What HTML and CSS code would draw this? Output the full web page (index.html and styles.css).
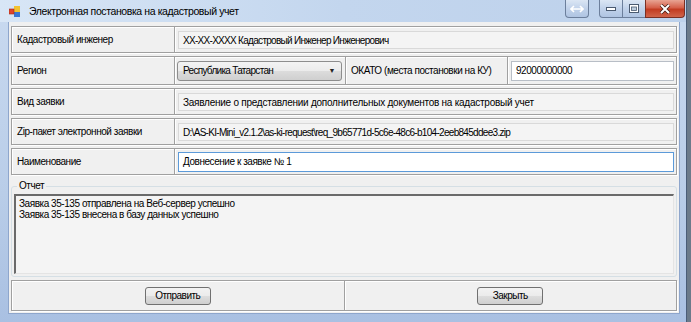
FILE: index.html
```html
<!DOCTYPE html>
<html lang="ru">
<head>
    <meta charset="UTF-8">
    <title>Электронная постановка на кадастровый учет</title>
    <link rel="stylesheet" href="styles.css">
</head>
<body>
    <div class="window">
        <!-- Title bar -->
        <div class="titlebar">
            <svg class="app-icon" width="12" height="11" viewBox="0 0 12 11">
                <rect x="0" y="3" width="5" height="5" fill="#e0452c"/>
                <rect x="5" y="0" width="6" height="6" fill="#f2c230"/>
                <rect x="5" y="6" width="6" height="5" fill="#3a78d4"/>
                <rect x="0" y="3" width="5" height="5" fill="none" stroke="#a02a18" stroke-width="0.6"/>
            </svg>
            <span class="title">Электронная постановка на кадастровый учет</span>
            <div class="caption-buttons">
                <div class="cap-btn help">
                    <svg width="14" height="8" viewBox="0 0 14 8"><path d="M1 4h12M4 1L1 4l3 3M10 1l3 3-3 3" stroke="#fff" stroke-width="1.6" fill="none"/></svg>
                </div>
                <div class="cap-group">
                    <div class="cap-btn min">
                        <svg width="10" height="4" viewBox="0 0 10 4"><rect x="0.5" y="0.5" width="9" height="3" fill="#fff" stroke="#4a5a70"/></svg>
                    </div>
                    <div class="cap-btn max">
                        <svg width="10" height="9" viewBox="0 0 10 9"><rect x="0.5" y="0.5" width="9" height="8" fill="#fff" stroke="#4a5a70"/><rect x="2.5" y="3" width="5" height="3.5" fill="#bcd" stroke="#4a5a70" stroke-width="0.8"/></svg>
                    </div>
                    <div class="cap-btn close">
                        <svg width="12" height="10" viewBox="0 0 12 10"><path d="M2 1l8 8M10 1L2 9" stroke="#3a1a14" stroke-width="3.4"/><path d="M2 1l8 8M10 1L2 9" stroke="#fff" stroke-width="2"/></svg>
                    </div>
                </div>
            </div>
        </div>

        <!-- Client area -->
        <div class="client">
            <div class="row">
                <div class="cell label-cell">Кадастровый инженер</div>
                <div class="cell value-cell">
                    <div class="readonly tight">XX-XX-XXXX Кадастровый Инженер Инженерович</div>
                </div>
            </div>

            <div class="row row-tall">
                <div class="cell label-cell">Регион</div>
                <div class="cell combo-cell">
                    <div class="combo">
                        <span class="tight">Республика Татарстан</span>
                        <span class="arrow">&#9660;</span>
                    </div>
                </div>
                <div class="cell okato-label">ОКАТО (места постановки на КУ)</div>
                <div class="cell okato-cell">
                    <div class="textbox">92000000000</div>
                </div>
            </div>

            <div class="row">
                <div class="cell label-cell">Вид заявки</div>
                <div class="cell value-cell">
                    <div class="readonly loose">Заявление о представлении дополнительных документов на кадастровый учет</div>
                </div>
            </div>

            <div class="row">
                <div class="cell label-cell">Zip-пакет электронной заявки</div>
                <div class="cell value-cell">
                    <div class="readonly tight">D:\AS-KI-Mini_v2.1.2\as-ki-request\req_9b65771d-5c6e-48c6-b104-2eeb845ddee3.zip</div>
                </div>
            </div>

            <div class="row">
                <div class="cell label-cell">Наименование</div>
                <div class="cell value-cell">
                    <div class="textbox focused">Довнесение к заявке № 1</div>
                </div>
            </div>

            <!-- Report group -->
            <div class="groupbox">
                <span class="group-title">Отчет</span>
                <div class="report">
                    <div>Заявка 35-135 отправлена на Веб-сервер успешно</div>
                    <div>Заявка 35-135 внесена в базу данных успешно</div>
                </div>
            </div>

            <!-- Buttons -->
            <div class="row button-row">
                <div class="cell btn-cell"><button class="btn">Отправить</button></div>
                <div class="cell btn-cell"><button class="btn">Закрыть</button></div>
            </div>
        </div>
    </div>
</body>
</html>
```

FILE: styles.css
```css
body {
    margin: 0;
    background: #6b7a8a;
    font-family: "Liberation Sans", Arial, sans-serif;
    font-size: 10px;
    letter-spacing: -0.45px;
    color: #000;
}

.window {
    width: 687px;
    height: 322px;
    background: linear-gradient(to bottom, #c9daf0 0%, #b9cde8 60%, #a9c0e2 100%);
    border-right: 1px solid #4a5d78;
    box-sizing: border-box;
    display: flex;
    flex-direction: column;
}

/* Title bar */
.titlebar {
    height: 22px;
    flex: none;
    display: flex;
    align-items: center;
    padding-left: 9px;
    background: linear-gradient(to right, #d8e6f6 0%, #c3d6ee 50%, #bdd1eb 100%);
}

.app-icon {
    margin-right: 8px;
}

.title {
    font-size: 10.5px;
    letter-spacing: -0.4px;
    color: #000;
}

.caption-buttons {
    margin-left: auto;
    display: flex;
    align-self: flex-start;
    margin-right: 1px;
}

.cap-btn {
    height: 18px;
    display: flex;
    align-items: center;
    justify-content: center;
    box-sizing: border-box;
    border: 1px solid #6c7f9c;
    border-top: none;
    background: linear-gradient(to bottom, #dbe6f4 0%, #c1d2ea 50%, #afc4e2 100%);
}

.cap-btn.help {
    width: 24px;
    border-radius: 0 0 4px 4px;
    margin-right: 10px;
}

.cap-group {
    display: flex;
}

.cap-btn.min {
    width: 23px;
    border-radius: 0 0 0 4px;
    border-right: none;
}

.cap-btn.max {
    width: 23px;
    border-right: none;
}

.cap-btn.close {
    width: 40px;
    border-radius: 0 0 4px 0;
    border-color: #7a3024;
    background: linear-gradient(to bottom, #e8a493 0%, #d5604a 45%, #c23c22 55%, #d0644a 100%);
}

/* Client area */
.client {
    flex: 1;
    margin: 0 6px 8px 8px;
    background: #f0f0f0;
    padding: 4px 2px 2px 2px;
    display: flex;
    flex-direction: column;
    gap: 3px;
    border: 1px solid #8ea6cc;
    border-top: none;
}

.row {
    display: flex;
    flex: none;
    height: 27px;
    box-sizing: border-box;
    border: 1px solid #a0a0a0;
    box-shadow: inset 1px 1px 0 #fff, 1px 1px 0 #fff;
}

.row-tall {
    height: 29px;
}

.cell {
    display: flex;
    align-items: center;
    box-sizing: border-box;
    padding: 0 3px;
    white-space: nowrap;
}

.label-cell {
    width: 163px;
    padding-left: 5px;
    border-right: 1px solid #a0a0a0;
    box-shadow: 1px 0 0 #fff;
}

.value-cell {
    flex: 1;
    padding: 0 2px 0 3px;
}

.readonly {
    flex: 1;
    height: 18px;
    line-height: 17px;
    box-sizing: border-box;
    padding-left: 4px;
    background: #f4f4f4;
    border: 1px solid #d9d9d9;
    white-space: nowrap;
    overflow: hidden;
}

.tight {
    letter-spacing: -0.7px;
}

.loose {
    letter-spacing: -0.25px;
}

.textbox {
    flex: 1;
    height: 20px;
    line-height: 18px;
    box-sizing: border-box;
    padding-left: 4px;
    background: #fff;
    border: 1px solid #b8bec6;
}

.textbox.focused {
    border-color: #5c9ad9;
}

.combo-cell {
    width: 171px;
    padding: 0 3px 0 2px;
    border-right: 1px solid #a0a0a0;
    box-shadow: 1px 0 0 #fff;
}

.combo {
    flex: 1;
    height: 20px;
    box-sizing: border-box;
    display: flex;
    align-items: center;
    justify-content: space-between;
    padding: 0 6px 0 5px;
    border: 1px solid #8d8d8d;
    border-radius: 3px;
    background: linear-gradient(to bottom, #f3f3f3 0%, #ebebeb 50%, #dcdcdc 51%, #cfcfcf 100%);
}

.arrow {
    font-size: 7px;
    color: #222;
}

.okato-label {
    width: 162px;
    padding-left: 5px;
    border-right: 1px solid #a0a0a0;
    box-shadow: 1px 0 0 #fff;
}

.okato-cell {
    flex: 1;
    padding: 0 2px 0 3px;
}

/* Report group */
.groupbox {
    position: relative;
    flex: none;
    margin-top: 8px;
    height: 91px;
    box-sizing: border-box;
    border: 1px solid #d5dfe5;
    border-radius: 3px;
    padding: 7px 2px 2px 2px;
    display: flex;
}

.group-title {
    position: absolute;
    top: -7px;
    left: 5px;
    padding: 0 2px;
    line-height: 12px;
    background: #f0f0f0;
}

.report {
    flex: 1;
    background: #f4f4f4;
    border-top: 2px solid #6a6a6a;
    border-left: 2px solid #6a6a6a;
    border-right: 1px solid #e4e4e4;
    border-bottom: 1px solid #e4e4e4;
    padding: 2px 3px;
    line-height: 11px;
}

/* Buttons */
.button-row {
    height: 31px;
}

.btn-cell {
    flex: 1;
    justify-content: center;
}

.btn-cell:first-child {
    border-right: 1px solid #a0a0a0;
    box-shadow: 1px 0 0 #fff;
}

.btn {
    width: 66px;
    height: 18px;
    font-family: "Liberation Sans", Arial, sans-serif;
    font-size: 10px;
    letter-spacing: -0.5px;
    color: #000;
    border: 1px solid #707070;
    border-radius: 3px;
    background: linear-gradient(to bottom, #f2f2f2 0%, #ebebeb 50%, #dddddd 51%, #cfcfcf 100%);
    padding: 0;
}
```
